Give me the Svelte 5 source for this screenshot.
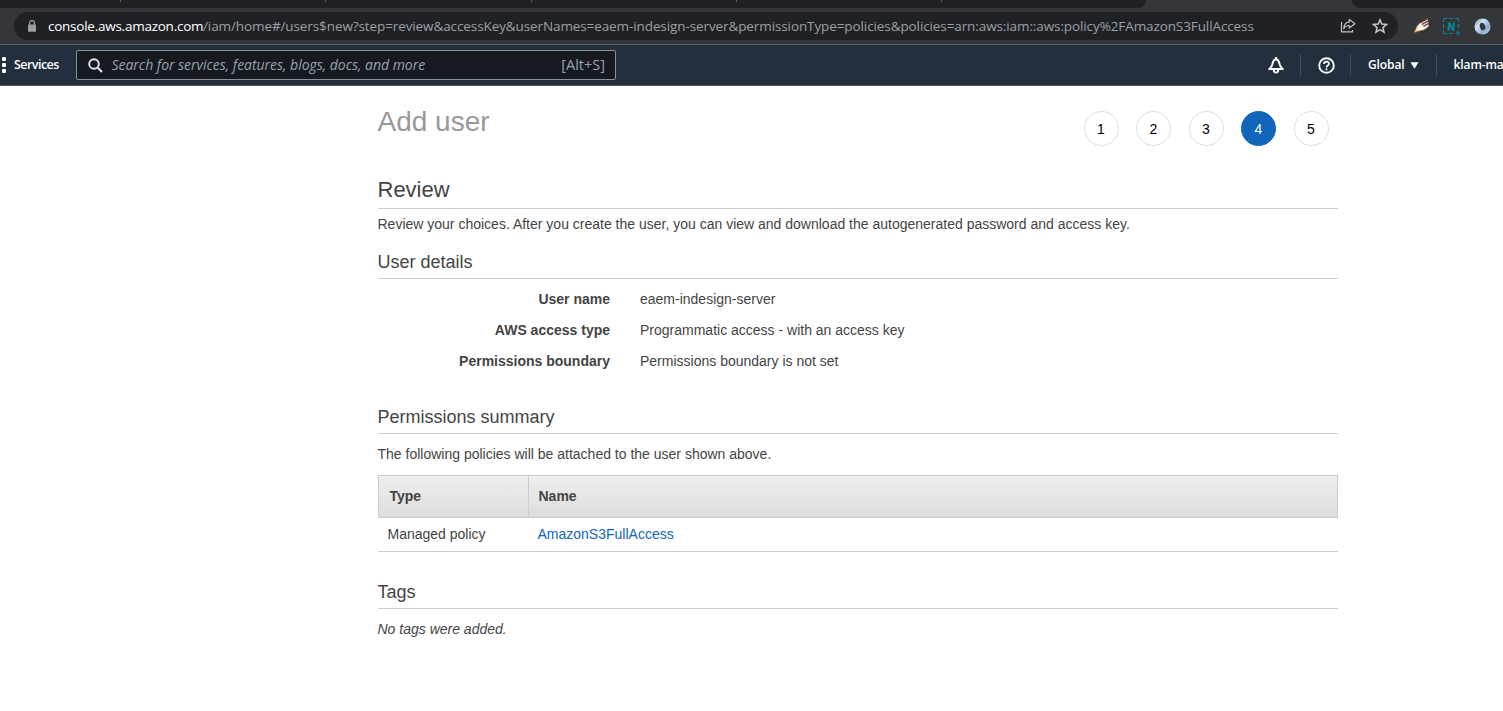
<script>
  const steps = [1, 2, 3, 4, 5];
  const current = 4;
  const details = [
    ['User name', 'eaem-indesign-server'],
    ['AWS access type', 'Programmatic access - with an access key'],
    ['Permissions boundary', 'Permissions boundary is not set']
  ];
</script>

<div class="page">
  <div class="tabs">
    <div class="strip left"><i></i><i></i><i></i><i></i><i></i></div>
    <div class="strip right"></div>
  </div>

  <div class="toolbar">
    <div class="omnibox">
      <svg class="lock" width="10" height="13" viewBox="0 0 10 13"><path d="M2.5 5V3.2a2.5 2.5 0 0 1 5 0V5" fill="none" stroke="#9aa0a6" stroke-width="1.3" /><rect x="1" y="4.6" width="8" height="7.2" rx=".8" fill="#9aa0a6" /></svg>
      <div class="url"><span class="host">console.aws.amazon.com</span><span class="path">/iam/home#/users$new?step=review&amp;accessKey&amp;userNames=eaem-indesign-server&amp;permissionType=policies&amp;policies=arn:aws:iam::aws:policy%2FAmazonS3FullAccess</span></div>
      <svg class="share" width="16" height="15" viewBox="0 0 16 15" fill="none" stroke="#c3c5c8" stroke-width="1.2"><path d="M1.500 4v9.800h11V12" /><path d="M9.300 1.500 14.900 5.700 9.300 9.900V7.500C6.600 7.400 4.900 8.500 3.800 10.700 4 6.900 6 4.300 9.300 3.900Z" stroke-linejoin="round" /></svg>
      <svg class="star" width="16" height="16" viewBox="0 0 16 16"><path d="m8 1.800 1.800 4.300 4.700.4-3.600 3.100 1.100 4.600L8 11.700l-4 2.500 1.100-4.600-3.600-3.100 4.700-.4Z" fill="none" stroke="#c3c5c8" stroke-width="1.500" /></svg>
    </div>
    <div class="extensions">
      <svg width="16" height="16" viewBox="0 0 16 16"><path d="M.5 15.500 4.500 7l6.500 5-6.500 2Z" fill="#edb56c" /><path d="m3 12 3.700-7.500 6.300 6.300-7 2.500Z" fill="#fff4e2" /><path d="M6.500 5 14.800.3 15.700 8.500l-4 2.800Z" fill="#e9dede" /><path d="M6.500 5.300 14.800.7M9 6.500l6-3.500M10.500 8.300l5-2.800" stroke="#64382f" stroke-width="1.200" /><path d="m1 15 8-2.500" stroke="#6d401e" /></svg>
      <svg width="17" height="17" viewBox="0 0 17 17" fill="none" stroke="#078493"><path d="M.5 4V.5H4M6 .5h4M12 .5h3.500V4M.5 6v4M.5 12v3.500H4M6 15.500h4M15.500 6v4" /><path d="M5.500 12.500 6.200 5l4 7 .8-7.500" stroke-width="2.200" stroke-linejoin="round" /><path d="M15 13v4M13 15h4" stroke-width="1.200" /></svg>
      <svg width="17" height="17" viewBox="0 0 17 17"><defs><linearGradient id="ring" x1="0" y1="0" x2="1" y2="1"><stop stop-color="#7195bd" /><stop offset=".35" stop-color="#d2e2f2" /><stop offset=".65" stop-color="#8babd0" /><stop offset="1" stop-color="#c6daf0" /></linearGradient></defs><circle cx="8.500" cy="8.500" r="8" fill="url(#ring)" /><ellipse cx="8.500" cy="8.500" rx="2.600" ry="3.700" fill="#303640" transform="rotate(-20 8.500 8.500)" /></svg>
    </div>
  </div>

  <nav>
    <svg class="grid" width="6" height="17" viewBox="0 0 6 17" fill="#fff"><rect x="2" y="1" width="4" height="4" rx="1" /><rect x="2" y="7" width="4" height="4" rx="1" /><rect x="2" y="13" width="4" height="4" rx="1" /></svg>
    <span class="services">Services</span>
    <div class="search">
      <svg width="15" height="15" viewBox="0 0 15 15" fill="none" stroke="#e4e7e8" stroke-width="1.900"><circle cx="6" cy="6" r="4.800" /><path d="m9.500 9.500 4.500 4.500" /></svg>
      <span class="hint">Search for services, features, blogs, docs, and more</span>
      <span class="key">[Alt+S]</span>
    </div>
    <div class="actions">
      <div class="action bell"><svg width="16" height="17" viewBox="0 0 16 17" fill="none" stroke="#fff" stroke-width="1.900"><path d="M8 2C5.300 2.900 4.800 5 4.400 7.200 3.900 9.500 2.700 10.300 1.200 12h13.600C13.300 10.300 12.100 9.500 11.600 7.200 11.200 5 10.700 2.900 8 2Z" stroke-linejoin="round" /><path d="M8 0v2M5.700 12.500c.1 4.200 4.500 4.200 4.600 0" /></svg></div>
      <div class="action help"><svg width="17" height="17" viewBox="0 0 17 17" fill="none" stroke="#fff" stroke-width="1.900"><circle cx="8.500" cy="8.500" r="7.300" /><path d="M6 7c0-3.300 5-3 5-.3 0 1.700-2.500 1.700-2.500 3.800M8.500 11.500v1.800" stroke-width="1.700" /></svg></div>
      <div class="action region"><span>Global</span><svg width="9" height="7" viewBox="0 0 9 7"><path d="M.5.300h8L4.500 6.800Z" fill="#fff" /></svg></div>
      <div class="action account">klam-ma</div>
    </div>
  </nav>

  <main>
    <header>
      <h1>Add user</h1>
      <div class="steps">
        {#each steps as step}
          <span class:active={step === current}>{step}</span>
        {/each}
      </div>
    </header>

    <h2>Review</h2>
    <p class="intro">Review your choices. After you create the user, you can view and download the autogenerated password and access key.</p>

    <h3>User details</h3>
    <dl>
      {#each details as [label, value]}
        <dt>{label}</dt><dd>{value}</dd>
      {/each}
    </dl>

    <h3>Permissions summary</h3>
    <p class="note">The following policies will be attached to the user shown above.</p>
    <div class="table">
      <div class="row head"><span>Type</span><span>Name</span></div>
      <div class="row body"><span>Managed policy</span><span class="link">AmazonS3FullAccess</span></div>
    </div>

    <h3>Tags</h3>
    <p class="note"><em>No tags were added.</em></p>
  </main>
</div>

<style>
  :global(body) { margin: 0; background: #fff; }
  .page { width: 1503px; height: 711px; overflow: hidden; font: 14px/20px "Liberation Sans", Arial, sans-serif; color: #444; }
  .page * { box-sizing: border-box; }
  svg { display: block; flex: none; }

  .tabs { height: 8px; background: #35363a; display: flex; justify-content: space-between; }
  .strip { background: #202124; height: 8px; }
  .left { width: 1146px; border-bottom-right-radius: 8px; display: flex; padding-left: 120px; gap: 204.300px; }
  .left i { width: 1px; height: 2px; background: #5c5e62; }
  .right { width: 151px; border-bottom-left-radius: 8px; }

  .toolbar { height: 37px; background: #35363a; border-bottom: 1px solid #5d6066; display: flex; padding: 4px 0 0 14px; font-family: "Open Sans", "Noto Sans", sans-serif; }
  .omnibox { width: 1384px; height: 28px; border-radius: 14px; background: #202124; display: flex; align-items: center; padding-left: 13px; }
  .url { width: 1292px; margin-left: 11px; white-space: nowrap; font-size: 13.500px; display: flex; }
  .host { color: #fff; width: 155px; letter-spacing: -.25px; }
  .path { color: #9aa0a6; letter-spacing: -.1px; }
  .share { margin-top: -1px; }
  .star { margin-left: 16px; }
  .extensions { height: 28px; display: flex; align-items: center; gap: 14px; padding-left: 15px; }

  nav { height: 41px; background: #232f3e; border-bottom: 1px solid #4b5565; display: flex; align-items: center; color: #fff; font-family: "Open Sans", "Noto Sans", sans-serif; }
  .grid { margin-top: -1px; }
  .services { width: 62px; margin-left: 8px; font-size: 12.500px; font-weight: 600; letter-spacing: -.55px; }
  .search { width: 540px; height: 30px; background: #16191f; border: 1px solid #879596; border-radius: 2px; display: flex; align-items: center; padding: 0 10px 0 11px; color: #95a5a6; }
  .hint { margin-left: 8.500px; font-style: italic; font-size: 14px; letter-spacing: -.03px; white-space: nowrap; }
  .key { margin-left: auto; font-size: 14.500px; }
  .actions { height: 22px; margin-left: auto; display: flex; font-size: 12px; font-weight: 600; }
  .action { height: 22px; display: flex; align-items: center; }
  .action + .action { border-left: 1px solid #414d5c; }
  .bell { width: 32px; }
  .help { width: 50px; padding-left: 16.500px; }
  .region { width: 86px; padding-left: 17px; gap: 5px; letter-spacing: -.1px; }
  .account { width: 67px; padding-left: 16.500px; letter-spacing: -.1px; white-space: nowrap; overflow: hidden; }

  main { width: 960px; margin-left: 377.500px; padding-top: 20px; }
  header { height: 69px; display: flex; justify-content: space-between; align-items: flex-start; }
  h1, h2, h3, p, dl, dd { margin: 0; font-weight: 400; }
  h1 { font-size: 28px; line-height: 32px; color: #999; }
  .steps { display: flex; gap: 17.500px; padding: 5px 9px 0 0; }
  .steps span { width: 35px; height: 35px; border: 1px solid #ddd; border-radius: 50%; text-align: center; line-height: 35px; color: #000; }
  .steps .active { background: #1166bb; border-color: #1166bb; color: #fff; }
  h2 { height: 34px; font-size: 22px; line-height: 30px; border-bottom: 1px solid #ccc; }
  h3 { height: 29px; font-size: 18px; line-height: 24px; border-bottom: 1px solid #ccc; }
  .intro { padding: 5px 0 16px; }
  dl { display: grid; grid-template-columns: 232.500px 1fr; column-gap: 30px; line-height: 31px; padding: 5px 0 28px; }
  dt { text-align: right; font-weight: 700; }
  .note { padding: 10px 0 11px; }
  .table { margin-bottom: 28px; }
  .row { display: grid; grid-template-columns: 150px 1fr; }
  .head { height: 43px; border: 1px solid #ccc; background: linear-gradient(#eee, #ddd); font-weight: 700; line-height: 41px; }
  .head span { padding-left: 11px; }
  .head span + span { border-left: 1px solid #ccc; padding-left: 10px; margin-left: -1px; }
  .body { height: 34px; border-bottom: 1px solid #ccc; line-height: 33px; }
  .body span { padding-left: 10px; }
  .link { color: #1166bb; }
</style>
